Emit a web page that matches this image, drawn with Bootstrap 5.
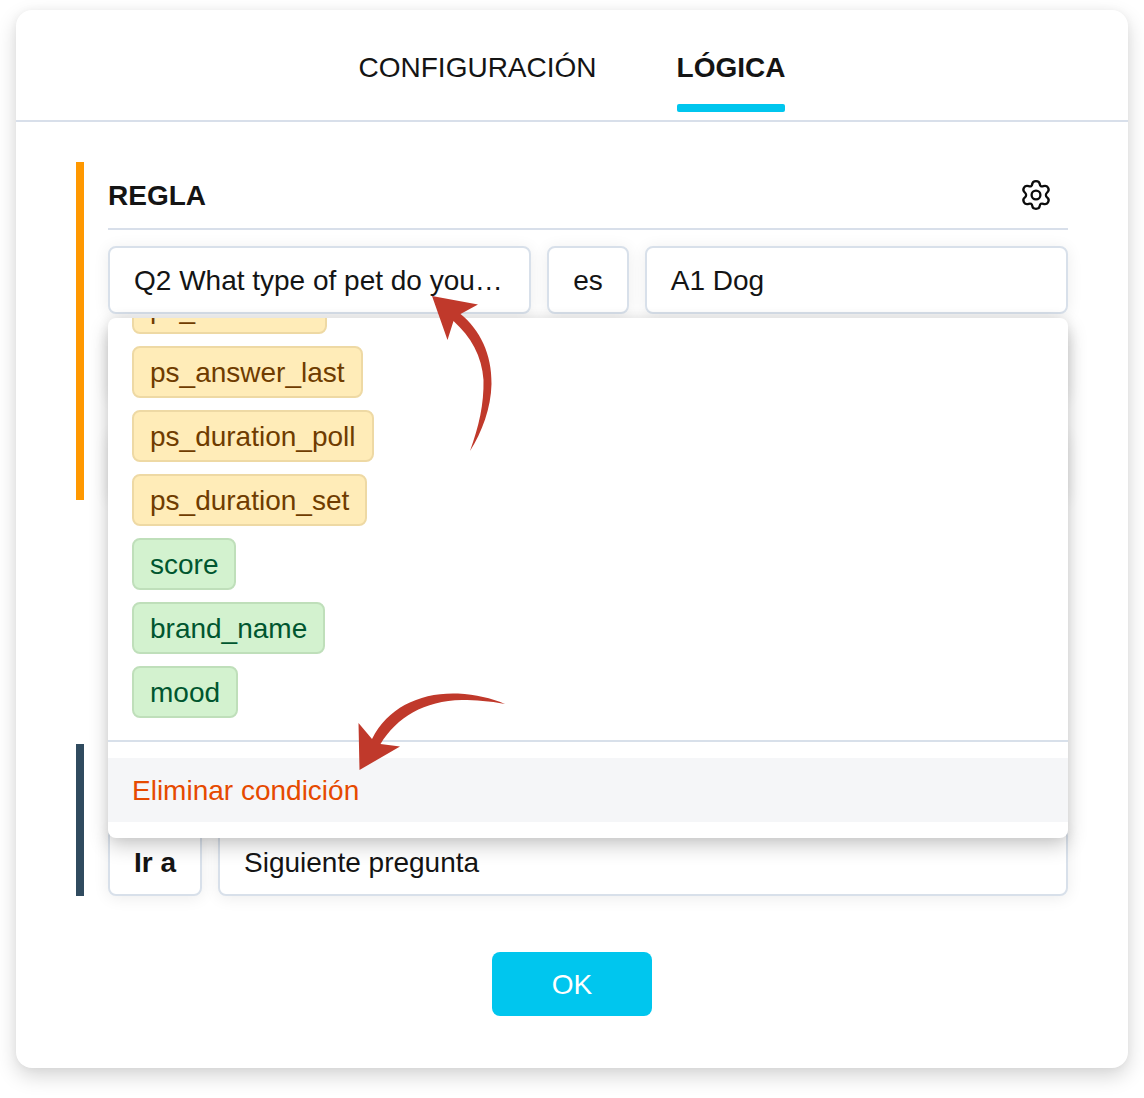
<!DOCTYPE html>
<html lang="es">
<head>
<meta charset="utf-8">
<meta name="viewport" content="width=device-width, initial-scale=1">
<title>Lógica</title>
<link href="https://cdn.jsdelivr.net/npm/bootstrap@5.3.0/dist/css/bootstrap.min.css" rel="stylesheet">
<style>
  body { font-family: "Liberation Sans", Arial, sans-serif; font-size: 28px; line-height: 40px; color: #141414; background: #fff; }
  button { color: inherit; }
  .page-wrap { padding: 10px 16px 30px; }
  .editor { border-radius: 16px; background: #fff; box-shadow: 0 8px 20px rgba(0,0,0,.17), 0 0 8px rgba(0,0,0,.04); }
  .editor-tabs { gap: 80px; height: 112px; padding-bottom: 8px; border-bottom: 2px solid #d8dfea; }
  .editor-tab { display: flex; flex-direction: column; justify-content: flex-end; gap: 16px; padding: 0; border: 0; background: none; }
  .editor-tab::after { content: ""; height: 8px; border-radius: 2px; }
  .editor-tab.active { font-weight: 700; }
  .editor-tab.active::after { background: #00c6ee; }
  .editor-body { padding: 40px 60px 52px; }
  .rule-block { padding-left: 24px; border-left: 8px solid #ff9800; }
  .action-block { margin-top: 244px; border-left-color: #304b5f; }
  .block-head { height: 68px; padding-right: 16px; margin-bottom: 16px; border-bottom: 2px solid #d8dfea; }
  .block-title { margin: 0; padding-top: 2px; font-size: 28px; line-height: 40px; font-weight: 700; }
  .field { height: 68px; padding: 2px 24px 0; border: 2px solid #d8e0ea; border-radius: 8px; background: #fff; text-align: left; box-shadow: 0 2px 16px rgba(0,0,0,.08); }
  .field-wide { flex: 1 1 0; min-width: 0; }
  .add-slot { margin-top: 34px; }
  .picker { position: absolute; z-index: 2; top: 72px; left: 0; right: 0; border-radius: 8px; background: #fff; box-shadow: 0 8px 20px rgba(0,0,0,.2), 0 0 12px rgba(0,0,0,.07); }
  .picker-list { height: 422px; gap: 12px; padding: 0 24px 22px; overflow: hidden; border-radius: 8px 8px 0 0; }
  .tag { padding: 5px 16px 3px; border: 2px solid #eed9a4; border-radius: 8px; background: #ffecb8; color: #6f3c00; }
  .tag-green { border-color: #bfdfba; background: #d3f2cf; color: #00562f; }
  .picker-foot { padding: 16px 0; border-top: 2px solid #d8e0ea; }
  .remove-item { height: 64px; padding: 2px 24px 0; border: 0; background: #f5f6f8; color: #e64a00; text-align: left; }
  .ok-btn { width: 160px; height: 64px; margin-top: 56px; padding-top: 2px; border: 0; border-radius: 8px; background: #00c6ee; color: #fff; }
  .pointer { position: absolute; z-index: 3; fill: #c0392b; pointer-events: none; }
  .pointer-up { top: 48px; left: 322px; }
  .pointer-down { top: 442px; left: 248px; }
</style>
</head>
<body>
<main class="page-wrap">
  <section class="editor">
    <div class="editor-tabs d-flex justify-content-center" role="tablist">
      <button type="button" class="editor-tab" role="tab" aria-selected="false">CONFIGURACIÓN</button>
      <button type="button" class="editor-tab active" role="tab" aria-selected="true">LÓGICA</button>
    </div>
    <div class="editor-body">
      <div class="rule-block">
        <div class="block-head d-flex align-items-center justify-content-between">
          <h2 class="block-title">REGLA</h2>
          <button type="button" class="btn p-0 border-0 d-flex" aria-label="Ajustes">
            <svg width="32" height="32" viewBox="0 0 32 32" fill="none" stroke="#0c0c0c" stroke-width="2.300" stroke-linejoin="round"><circle cx="16" cy="16" r="4.400"/><path d="M12.300 5C12.500 2.900 13.700 2.200 16 2.200s3.500.7 3.700 2.800c.3 2.200 1.700 2.800 3.600 2.200 2.300-.7 3.700-.2 4.700 1.500 1.200 2 1 3.300-.7 4.600-1.900 1.500-1.900 3.900 0 5.400 1.700 1.300 1.900 2.600.7 4.600-1 1.700-2.400 2.200-4.700 1.500-1.900-.6-3.300 0-3.600 2.200-.2 2.100-1.400 2.800-3.700 2.800s-3.500-.7-3.700-2.800c-.3-2.200-1.700-2.800-3.600-2.200-2.300.7-3.700.2-4.700-1.500-1.200-2-1-3.300.7-4.600 1.900-1.500 1.900-3.900 0-5.400-1.700-1.300-1.900-2.600-.7-4.600 1-1.700 2.400-2.200 4.700-1.500 1.900.6 3.300 0 3.600-2.200Z"/></svg>
          </button>
        </div>
        <div class="position-relative">
          <div class="d-flex gap-3">
            <button type="button" class="field field-wide text-truncate" aria-haspopup="listbox" aria-expanded="true">Q2 What type of pet do you…</button>
            <button type="button" class="field" aria-haspopup="listbox">es</button>
            <button type="button" class="field field-wide text-truncate" aria-haspopup="listbox">A1 Dog</button>
          </div>
          <div class="picker">
            <div class="picker-list d-flex flex-column align-items-start justify-content-end">
              <span class="tag">ps_audience</span>
              <span class="tag">ps_answer_last</span>
              <span class="tag">ps_duration_poll</span>
              <span class="tag">ps_duration_set</span>
              <span class="tag tag-green">score</span>
              <span class="tag tag-green">brand_name</span>
              <span class="tag tag-green">mood</span>
            </div>
            <div class="picker-foot">
              <button type="button" class="remove-item w-100 d-block">Eliminar condición</button>
            </div>
          </div>
          <svg class="pointer pointer-up" width="64" height="160" viewBox="430 294 64 160" aria-hidden="true"><path d="M432 296L478 304.500 460.500 314C480 330 492 354 491.500 384 491 408 482 432 470 451 479 426 484 404 483.500 380 482 356 471 337 453.500 321L447.500 340Z"/></svg>
          <svg class="pointer pointer-down" width="152" height="84" viewBox="356 688 152 84" aria-hidden="true"><path d="M359.500 770L358.500 723 372 739C388 707 421 692 458 693.500 476 694.500 491 698 505 704 489 701 476 700 462 700 424 701 397 717 380.500 744L400 746.500Z"/></svg>
        </div>
        <div class="field mt-3"></div>
        <div class="field add-slot"></div>
      </div>
      <div class="rule-block action-block">
        <div class="block-head"></div>
        <div class="d-flex gap-3">
          <button type="button" class="field fw-bold" aria-haspopup="listbox">Ir a</button>
          <button type="button" class="field field-wide text-truncate" aria-haspopup="listbox">Siguiente pregunta</button>
        </div>
      </div>
      <div class="d-flex justify-content-center"><button type="button" class="ok-btn">OK</button></div>
    </div>
  </section>
</main>
<script src="https://cdn.jsdelivr.net/npm/bootstrap@5.3.0/dist/js/bootstrap.bundle.min.js"></script>
</body>
</html>
